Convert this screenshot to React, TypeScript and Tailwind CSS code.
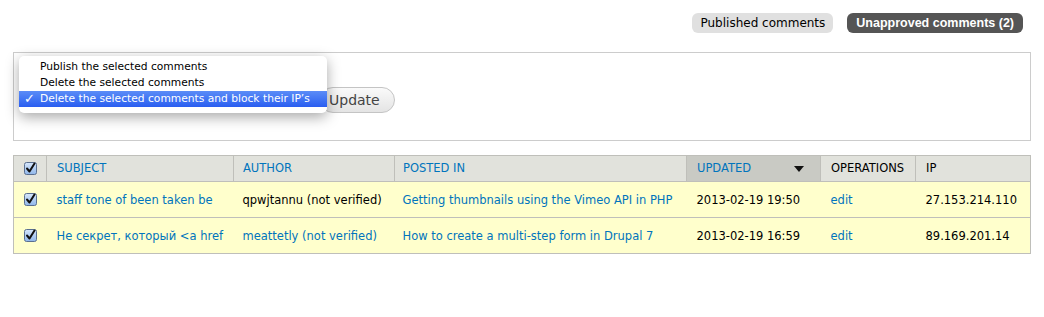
import React from 'react';

const font = { fontFamily: '"DejaVu Sans", "Lucida Grande", sans-serif' };

const Check = () => (
  <svg width="13" height="13" viewBox="0 0 13 13" className="block">
    <defs>
      <linearGradient id="cb" x1="0" y1="0" x2="0" y2="1">
        <stop offset="0" stopColor="#d7e7fb" />
        <stop offset="1" stopColor="#8fb6ea" />
      </linearGradient>
    </defs>
    <rect x="0.5" y="0.5" width="12" height="12" rx="2" fill="url(#cb)" stroke="#5a6f90" />
    <path d="M3 6.5 L5.5 9.5 L10.5 1.5" fill="none" stroke="#111" strokeWidth="2" strokeLinecap="round" strokeLinejoin="round" />
  </svg>
);

const rows = [
  {
    subject: 'staff tone of been taken be',
    author: 'qpwjtannu (not verified)',
    authorLink: false,
    posted: 'Getting thumbnails using the Vimeo API in PHP',
    updated: '2013-02-19 19:50',
    ip: '27.153.214.110',
  },
  {
    subject: 'Не секрет, который <a href',
    author: 'meattetly (not verified)',
    authorLink: true,
    posted: 'How to create a multi-step form in Drupal 7',
    updated: '2013-02-19 16:59',
    ip: '89.169.201.14',
  },
];

export default function App() {
  return (
    <div className="w-[1044px] h-[317px] bg-white text-[11.5px] text-black" style={font}>
      <div className="flex justify-end gap-[14px] pt-[13px] pr-[21px]">
        <span className="h-[20px] leading-[20px] px-[8px] rounded-[6px] bg-[#e0e0e0] text-black text-[12px]">Published comments</span>
        <span
          className="h-[20px] leading-[20px] px-[9px] rounded-[6px] bg-[#555555] text-white font-bold text-[12.5px]"
          style={{ fontFamily: '"Liberation Sans", Arial, sans-serif' }}
        >
          Unapproved comments (2)
        </span>
      </div>

      <div className="relative mx-[13px] mt-[19px] h-[89px] border border-[#cccccc]">
        <div className="pt-[34px] pl-[306px]">
          <button className="h-[26px] w-[75px] text-left pl-[8px] rounded-full border border-[#c4c4c4] bg-gradient-to-b from-[#fafafa] to-[#e4e4e4] text-[14px] text-[#444]">
            Update
          </button>
        </div>
        <div className="absolute left-[5px] top-[3px] w-[308px] h-[57px] bg-white rounded-[5px] shadow-[0_4px_14px_rgba(0,0,0,0.35)] pt-[3px] whitespace-nowrap text-[10.7px]">
          <div className="h-[16px] leading-[16px] pl-[21px]">Publish the selected comments</div>
          <div className="h-[16px] leading-[16px] pl-[21px]">Delete the selected comments</div>
          <div className="relative h-[16px] leading-[16px] pl-[21px] bg-gradient-to-b from-[#5b8cf7] to-[#2a5df0] text-white">
            <span className="absolute left-[5px] top-0 text-[13px] leading-[16px] font-bold">✓</span>
            Delete the selected comments and block their IP’s
          </div>
        </div>
      </div>

      <table className="mx-[13px] mt-[14px] w-[1018px] border-collapse border border-[#bfbfba] table-fixed">
        <colgroup>
          <col className="w-[33px]" />
          <col className="w-[187px]" />
          <col className="w-[161px]" />
          <col className="w-[292px]" />
          <col className="w-[134px]" />
          <col className="w-[95px]" />
          <col />
        </colgroup>
        <thead>
          <tr className="h-[26px] bg-[#e1e2dc] text-left">
            <th className="border-r border-[#bfbfba] pl-[10px] font-normal"><Check /></th>
            <th className="border-r border-[#bfbfba] pl-[10px] font-normal text-[#0074bd]">SUBJECT</th>
            <th className="border-r border-[#bfbfba] pl-[9px] font-normal text-[#0074bd]">AUTHOR</th>
            <th className="border-r border-[#bfbfba] pl-[8px] font-normal text-[#0074bd]">POSTED IN</th>
            <th className="border-r border-[#bfbfba] pl-[10px] pr-[16px] font-normal text-[#0074bd] bg-[#c9cac4]">
              <div className="flex items-center justify-between">
                <span>UPDATED</span>
                <svg width="10" height="6" viewBox="0 0 10 6"><path d="M0 0 H10 L5 6 Z" fill="#111" /></svg>
              </div>
            </th>
            <th className="border-r border-[#bfbfba] pl-[10px] font-normal">OPERATIONS</th>
            <th className="pl-[10px] font-normal">IP</th>
          </tr>
        </thead>
        <tbody>
          {rows.map((r, i) => (
            <tr key={i} className="h-[36px] bg-[#ffffcc] border-t border-[#bfbfba]">
              <td className="pl-[10px]"><Check /></td>
              <td className="pl-[10px] pt-[3px] text-[#0074bd] whitespace-nowrap overflow-hidden">{r.subject}</td>
              <td className={`pl-[9px] pt-[3px] whitespace-nowrap ${r.authorLink ? 'text-[#0074bd]' : 'text-black'}`}>{r.author}</td>
              <td className="pl-[8px] pt-[3px] text-[#0074bd] whitespace-nowrap">{r.posted}</td>
              <td className="pl-[10px] pt-[3px] whitespace-nowrap">{r.updated}</td>
              <td className="pl-[10px] pt-[3px] text-[#0074bd]">edit</td>
              <td className="pl-[10px] pt-[3px]">{r.ip}</td>
            </tr>
          ))}
        </tbody>
      </table>
    </div>
  );
}
